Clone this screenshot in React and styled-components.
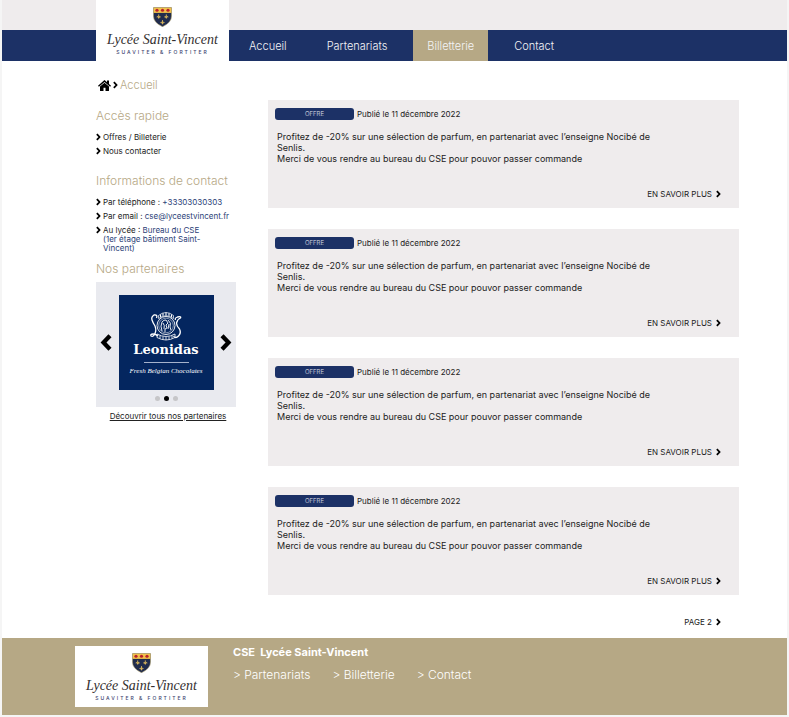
import React from "react";
import styled, { createGlobalStyle } from "styled-components";

const navy = "#1c3166";
const gold = "#b6a885";
const grey = "#efeced";

const GlobalStyle = createGlobalStyle`
  *, *::before, *::after { box-sizing: border-box; }
  body {
    margin: 0;
    padding: 0 2px 2px;
    background: #f5f5f5;
    color: #222;
    font-family: Inter, "Liberation Sans", sans-serif;
  }
  h1, h2, p, ul, address { margin: 0; padding: 0; font-weight: 400; font-style: normal; }
  ul { list-style: none; }
  a { color: inherit; text-decoration: none; }
  button { border: 0; padding: 0; background: none; cursor: pointer; }
  svg { display: block; flex: none; }
`;

const Page = styled.div`
  background: #fff;
`;

const Header = styled.header`
  display: grid;
  grid-template-columns: 94px 133px 1fr;
  grid-template-rows: 30px 31px;
  background: linear-gradient(${grey} 30px, ${navy} 30px);
`;

const LogoCard = styled.a`
  grid-column: 2;
  grid-row: 1 / -1;
  display: flex;
  flex-direction: column;
  align-items: center;
  width: 133px;
  height: 61px;
  padding-top: 7px;
  background: #fff;
`;

const LogoName = styled.span`
  margin-top: 4px;
  font: italic 14px/17px "Liberation Serif", serif;
  color: #332f2f;
  white-space: nowrap;
`;

const LogoMotto = styled.span`
  margin-top: 1px;
  font-size: 5px;
  font-weight: 500;
  line-height: 7px;
  letter-spacing: 2px;
  color: #3d4470;
  white-space: nowrap;
`;

const Nav = styled.nav`
  grid-column: 3;
  grid-row: 2;
  display: flex;
  gap: 12px;
  padding-left: 6px;
`;

const NavLink = styled.a`
  display: flex;
  align-items: center;
  padding: 0 14px;
  font-size: 11px;
  font-weight: 300;
  color: #f4f4f6;
  background: ${(p) => (p.$active ? gold : "transparent")};
`;

const Body = styled.div`
  display: grid;
  grid-template-columns: 140px 1fr;
  gap: 32px;
  padding: 0 48px 0 94px;
`;

const Sidebar = styled.aside`
  padding-top: 16px;
`;

const Breadcrumb = styled.nav`
  display: flex;
  align-items: center;
  gap: 2px;
  padding-left: 2px;
  font-size: 11px;
  font-weight: 300;
  line-height: 16px;
  color: ${gold};
`;

const SideTitle = styled.h2`
  margin-top: ${(p) => p.$space}px;
  font-size: 12px;
  font-weight: 300;
  line-height: 16px;
  color: ${gold};
  white-space: nowrap;
`;

const SideList = styled.ul`
  display: flex;
  flex-direction: column;
  gap: 5px;
  margin-top: 9px;
`;

const SideItem = styled.li`
  display: flex;
  gap: 2px;
  font-size: 8px;
  line-height: 9px;
  white-space: nowrap;
`;

const ContactValue = styled.a`
  color: #2b4177;
`;

const Carousel = styled.section`
  margin-top: 5px;
  padding: 13px 4px 6px;
  background: #e9eaef;
`;

const Slides = styled.div`
  display: flex;
  align-items: center;
  justify-content: space-between;
`;

const PartnerLogo = styled.div`
  display: flex;
  flex-direction: column;
  align-items: center;
  width: 95px;
  height: 95px;
  padding-top: 16px;
  background: #04265f;
  color: #fff;
`;

const PartnerName = styled.strong`
  font: bold 13px/15px "DejaVu Serif", serif;
`;

const PartnerRule = styled.span`
  width: 45px;
  height: 1px;
  margin-top: 5px;
  background: #a5b2cc;
`;

const PartnerTagline = styled.em`
  margin-top: 3px;
  font: italic 7px/11px "Liberation Serif", serif;
  white-space: nowrap;
`;

const Dots = styled.div`
  display: flex;
  justify-content: center;
  gap: 4px;
  margin-top: 6px;
`;

const Dot = styled.button`
  width: 5px;
  height: 5px;
  border-radius: 50%;
  background: ${(p) => (p.$active ? "#000" : "#c6c6c8")};
`;

const AllPartners = styled.a`
  display: block;
  margin-top: 4px;
  padding-left: 4px;
  font-size: 8px;
  line-height: 11px;
  text-align: center;
  text-decoration: underline;
  text-underline-offset: 1px;
`;

const Main = styled.main`
  display: flex;
  flex-direction: column;
  gap: 21px;
  padding-top: 39px;
`;

const Card = styled.article`
  display: flex;
  flex-direction: column;
  min-height: 108px;
  padding: 8px 18px 8px 7px;
  background: ${grey};
`;

const CardHead = styled.div`
  display: flex;
  align-items: center;
  gap: 3px;
  font-size: 8px;
  line-height: 12px;
`;

const Tag = styled.span`
  width: 79px;
  border-radius: 3px;
  background: ${navy};
  color: #e2e5ee;
  font-size: 6px;
  font-weight: 300;
  text-align: center;
`;

const CardText = styled.p`
  max-width: 400px;
  margin: 11px 0 auto 2px;
  font-size: 9px;
  line-height: 11px;
`;

const MoreLink = styled.a`
  align-self: flex-end;
  display: flex;
  align-items: center;
  gap: 4px;
  font-size: 8px;
  line-height: 12px;
`;

const Pager = styled.nav`
  display: flex;
  justify-content: flex-end;
  padding: 0 18px 10px 0;
`;

const Footer = styled.footer`
  display: flex;
  align-items: flex-start;
  gap: 25px;
  padding: 8px 24px 8px 73px;
  background: ${gold};
  color: #fff;
`;

const FooterTitle = styled.h2`
  font-size: 11px;
  font-weight: 700;
  line-height: 13px;
  white-space: pre;
`;

const FooterLinks = styled.nav`
  display: flex;
  gap: 22px;
  margin-top: 8px;
  font-size: 12px;
  font-weight: 300;
  line-height: 16px;
`;

const Chevron = ({ size = 8, left = false }) => (
  <svg width={Math.round(size * 0.65)} height={size} viewBox="0 0 6.500 10" aria-hidden="true">
    <path
      d={left ? "M5.400 1.300 1.900 5 5.400 8.700" : "M1.100 1.300 4.600 5 1.100 8.700"}
      fill="none"
      stroke="#000"
      strokeWidth="2.300"
    />
  </svg>
);

const HomeIcon = () => (
  <svg width="13" height="11" viewBox="0 0 26 22" aria-hidden="true">
    <path d="M13 0 0 11.500l1.800 2.100L13 4l11.200 9.600L26 11.500l-4-3.600V1h-4v3.400z" />
    <path d="M13 5.500 4 13v8q0 1 1 1h6v-6.500h4V22h6q1 0 1-1v-8z" />
  </svg>
);

const fleurs = [[6, 10], [14, 10], [10, 16]];

const Crest = () => (
  <svg width="19" height="20" viewBox="0 0 20 21" aria-hidden="true">
    <path d="M.5.500h19v9q0 7-9.500 11.200Q.500 16.500.500 9.500z" fill="#202c4d" stroke="#a99a68" strokeWidth=".6" />
    <path d="M.7.700h18.600v5.500H.7z" fill="#f2c14b" />
    {[4.2, 10, 15.800].map((x) => (
      <circle key={x} cx={x} cy="3.400" r="1.700" fill="#b8212b" />
    ))}
    {fleurs.map(([x, y]) => (
      <path
        key={`${x}-${y}`}
        transform={`translate(${x} ${y})`}
        d="M0-2.200V2.200M-1.800.800Q-2-1 0 .6 2-1 1.800.800M-1 1h2"
        fill="none"
        stroke="#d9b65c"
        strokeWidth="1"
      />
    ))}
  </svg>
);

const LeonidasEmblem = () => (
  <svg width="34" height="31" viewBox="0 0 34 31" fill="none" stroke="#fff" aria-hidden="true">
    <path d="M9.500 7.500V4.500Q17-1.500 24.500 4.500V7.500Q17 2 9.500 7.500" strokeWidth=".7" />
    <path d="M11.500 3.500v2.500M14 2.200v2.600M17 1.500V4.500M20 2.200v2.600M22.500 3.500v2.500" strokeWidth="1.100" />
    <circle cx="17" cy="14.500" r="9" strokeWidth=".9" />
    <circle cx="17" cy="14.500" r="7.300" strokeWidth=".5" />
    <path d="M13 20q-2-5 0-9 2-2.500 4-2l2 3-2 2 1 3-2 1v3M14 12q2 2 1 6M19 9q4 3 2 7l1 3M20 13l-1 5" strokeWidth=".9" />
    <path d="M7.500 7Q9 3.500 5 4q-3 2-2 5 1 3 3 6 2 5-1 9-1 2-3 1-1-2 2-2 3 0 5 2" strokeWidth="1.300" />
    <path d="M26.500 9q-1-2 2-3 4-1 3 1-3 1-4 5 0 3 3 6 2 4-1 7-3 3-5 0" strokeWidth="1.300" />
    <path d="M8 23q9 5 18 0M8 26.500q9 5 18 0M8 23v3.500M26 23v3.500M11 24.500v3M14 25.500v3M17 26v3M20 25.500v3M23 24.500v3" strokeWidth=".8" />
  </svg>
);

const Logo = () => (
  <LogoCard href="#accueil">
    <Crest />
    <LogoName>Lycée Saint-Vincent</LogoName>
    <LogoMotto>SUAVITER &amp; FORTITER</LogoMotto>
  </LogoCard>
);

const OfferCard = () => (
  <Card>
    <CardHead>
      <Tag>OFFRE</Tag>
      <time dateTime="2022-12-11">Publié le 11 décembre 2022</time>
    </CardHead>
    <CardText>
      Profitez de -20% sur une sélection de parfum, en partenariat avec l’enseigne Nocibé de
      <br />
      Senlis.
      <br />
      Merci de vous rendre au bureau du CSE pour pouvor passer commande
    </CardText>
    <MoreLink href="#offre">
      EN SAVOIR PLUS <Chevron />
    </MoreLink>
  </Card>
);

export default function App() {
  return (
    <>
      <GlobalStyle />
      <Page>
        <Header>
          <Logo />
          <Nav aria-label="Navigation principale">
            <NavLink href="#accueil">Accueil</NavLink>
            <NavLink href="#partenariats">Partenariats</NavLink>
            <NavLink href="#billetterie" $active aria-current="page">Billetterie</NavLink>
            <NavLink href="#contact">Contact</NavLink>
          </Nav>
        </Header>
        <Body>
          <Sidebar>
            <Breadcrumb aria-label="Fil d’Ariane">
              <HomeIcon />
              <Chevron />
              <a href="#accueil">Accueil</a>
            </Breadcrumb>

            <SideTitle $space={15}>Accès rapide</SideTitle>
            <SideList>
              <SideItem><Chevron /><a href="#offres">Offres / Billeterie</a></SideItem>
              <SideItem><Chevron /><a href="#contact">Nous contacter</a></SideItem>
            </SideList>

            <SideTitle $space={17}>Informations de contact</SideTitle>
            <SideList>
              <SideItem>
                <Chevron />
                <span>Par téléphone : <ContactValue href="tel:+33303030303">+33303030303</ContactValue></span>
              </SideItem>
              <SideItem>
                <Chevron />
                <span>Par email : <ContactValue href="mailto:cse@lyceestvincent.fr">cse@lyceestvincent.fr</ContactValue></span>
              </SideItem>
              <SideItem>
                <Chevron />
                <address>
                  Au lycée :{" "}
                  <ContactValue as="span">
                    Bureau du CSE<br />(1er étage bâtiment Saint-<br />Vincent)
                  </ContactValue>
                </address>
              </SideItem>
            </SideList>

            <SideTitle $space={8}>Nos partenaires</SideTitle>
            <Carousel aria-label="Nos partenaires">
              <Slides>
                <button type="button" aria-label="Précédent"><Chevron size={19} left /></button>
                <PartnerLogo>
                  <LeonidasEmblem />
                  <PartnerName>Leonidas</PartnerName>
                  <PartnerRule />
                  <PartnerTagline>Fresh Belgian Chocolates</PartnerTagline>
                </PartnerLogo>
                <button type="button" aria-label="Suivant"><Chevron size={19} /></button>
              </Slides>
              <Dots>
                <Dot type="button" aria-label="Partenaire 1" />
                <Dot type="button" aria-label="Partenaire 2" $active />
                <Dot type="button" aria-label="Partenaire 3" />
              </Dots>
            </Carousel>
            <AllPartners href="#partenaires">Découvrir tous nos partenaires</AllPartners>
          </Sidebar>

          <Main>
            <OfferCard />
            <OfferCard />
            <OfferCard />
            <OfferCard />
            <Pager aria-label="Pagination">
              <MoreLink href="#page-2">PAGE 2 <Chevron /></MoreLink>
            </Pager>
          </Main>
        </Body>
        <Footer>
          <Logo />
          <div>
            <FooterTitle>{"CSE  Lycée Saint-Vincent"}</FooterTitle>
            <FooterLinks aria-label="Pied de page">
              <a href="#partenariats">&gt; Partenariats</a>
              <a href="#billetterie">&gt; Billetterie</a>
              <a href="#contact">&gt; Contact</a>
            </FooterLinks>
          </div>
        </Footer>
      </Page>
    </>
  );
}
